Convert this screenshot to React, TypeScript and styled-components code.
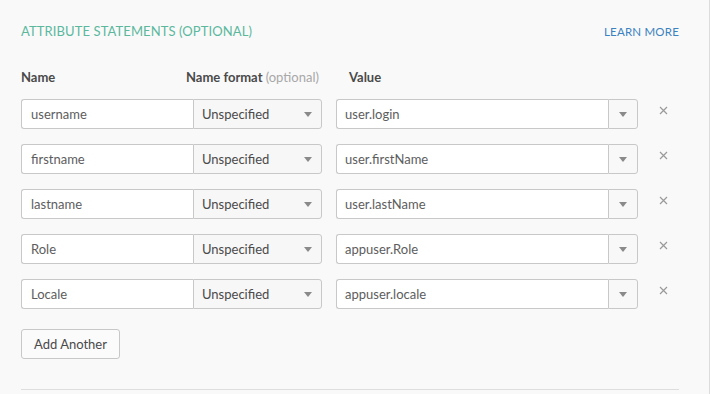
import React from "react";
import styled, { createGlobalStyle } from "styled-components";

const Global = createGlobalStyle`
  html, body { margin: 0; padding: 0; background: #ffffff; }
  body { font-family: Lato, "Open Sans", "Liberation Sans", sans-serif; }
  * { box-sizing: border-box; }
`;

const Panel = styled.section`
  width: 710px;
  height: 394px;
  background: #f9f9f9;
  border-right: 1px solid #dcdcdc;
  padding: 22px 30px 0 21px;
  overflow: hidden;
`;

const TitleRow = styled.div`
  display: flex;
  justify-content: space-between;
  align-items: center;
  height: 18px;
`;

const Title = styled.h2`
  margin: 0;
  font-size: 13px;
  font-weight: 400;
  color: #5bb89d;
  letter-spacing: 0.1px;
`;

const LearnMore = styled.a`
  font-size: 11.5px;
  color: #3b82c0;
  text-decoration: none;
  letter-spacing: 0.2px;
`;

const ColumnHeads = styled.div`
  display: grid;
  grid-template-columns: 165px 163px 1fr;
  margin-top: 29px;
  height: 16px;
  align-items: center;
`;

const ColumnHead = styled.span`
  font-size: 13px;
  font-weight: 700;
  color: #4a4a4a;
`;

const Optional = styled.span`
  font-weight: 400;
  color: #a8a8a8;
`;

const Rows = styled.div`
  display: flex;
  flex-direction: column;
  gap: 15px;
  margin-top: 14px;
`;

const Row = styled.div`
  display: flex;
  align-items: flex-start;
  height: 30px;
`;

const NameInput = styled.div`
  width: 172px;
  height: 30px;
  background: #fff;
  border: 1px solid #c8c8c8;
  border-right: none;
  border-radius: 3px 0 0 3px;
  padding: 0 9px;
  display: flex;
  align-items: center;
  font-size: 13px;
  color: #5d5d5d;
`;

const FormatSelect = styled.div`
  width: 129px;
  height: 30px;
  background: #f7f7f7;
  border: 1px solid #c8c8c8;
  border-radius: 0 3px 3px 0;
  padding: 0 9px 0 8px;
  display: flex;
  align-items: center;
  justify-content: space-between;
  font-size: 13px;
  color: #4a4a4a;
`;

const Caret = styled.span`
  width: 0;
  height: 0;
  border-left: 4px solid transparent;
  border-right: 4px solid transparent;
  border-top: 5px solid #8a8a8a;
`;

const ValueCombo = styled.div`
  display: flex;
  margin-left: 14px;
  height: 30px;
`;

const ValueInput = styled.div`
  width: 272px;
  height: 30px;
  background: #fff;
  border: 1px solid #c8c8c8;
  border-right: none;
  border-radius: 3px 0 0 3px;
  padding: 0 8px;
  display: flex;
  align-items: center;
  font-size: 13px;
  color: #5d5d5d;
`;

const ValueButton = styled.div`
  width: 30px;
  height: 30px;
  background: #f8f8f8;
  border: 1px solid #c8c8c8;
  border-radius: 0 3px 3px 0;
  display: flex;
  align-items: center;
  justify-content: center;
`;

const Remove = styled.button`
  margin-left: 19px;
  margin-top: 5px;
  width: 12px;
  height: 12px;
  padding: 0;
  border: none;
  background: none;
  display: flex;
  align-items: center;
  justify-content: center;
  cursor: pointer;
`;

const AddButton = styled.button`
  margin-top: 20px;
  width: 99px;
  height: 30px;
  background: #fbfbfb;
  border: 1px solid #c8c8c8;
  border-radius: 3px;
  font-family: inherit;
  font-size: 13px;
  color: #4a4a4a;
  padding: 0;
`;

const Divider = styled.hr`
  margin: 30px 0 0 0;
  border: none;
  border-top: 1px solid #dedede;
`;

const rows = [
  { name: "username", value: "user.login" },
  { name: "firstname", value: "user.firstName" },
  { name: "lastname", value: "user.lastName" },
  { name: "Role", value: "appuser.Role" },
  { name: "Locale", value: "appuser.locale" },
];

const XIcon = () => (
  <svg width="9" height="9" viewBox="0 0 9 9">
    <path d="M1 1 L8 8 M8 1 L1 8" stroke="#9a9a9a" strokeWidth="1.2" fill="none" />
  </svg>
);

export default function App() {
  return (
    <>
      <Global />
      <Panel>
        <TitleRow>
          <Title>ATTRIBUTE STATEMENTS (OPTIONAL)</Title>
          <LearnMore href="#">LEARN MORE</LearnMore>
        </TitleRow>
        <ColumnHeads>
          <ColumnHead>Name</ColumnHead>
          <ColumnHead>
            Name format <Optional>(optional)</Optional>
          </ColumnHead>
          <ColumnHead>Value</ColumnHead>
        </ColumnHeads>
        <Rows>
          {rows.map((r) => (
            <Row key={r.name}>
              <NameInput>{r.name}</NameInput>
              <FormatSelect>
                Unspecified
                <Caret />
              </FormatSelect>
              <ValueCombo>
                <ValueInput>{r.value}</ValueInput>
                <ValueButton>
                  <Caret />
                </ValueButton>
              </ValueCombo>
              <Remove aria-label="Remove">
                <XIcon />
              </Remove>
            </Row>
          ))}
        </Rows>
        <AddButton>Add Another</AddButton>
        <Divider />
      </Panel>
    </>
  );
}
